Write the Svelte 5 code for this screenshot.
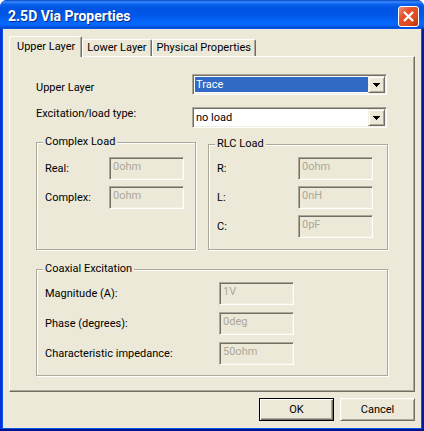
<script lang="ts">
  let activeTab = $state("Upper Layer");
  let layer = $state("Trace");
  let loadType = $state("no load");

  const tabs = ["Upper Layer", "Lower Layer", "Physical Properties"];

  const complexLoad = [
    { id: "real", label: "Real:", value: "0ohm" },
    { id: "complex", label: "Complex:", value: "0ohm" },
  ];

  const rlcLoad = [
    { id: "r", label: "R:", value: "0ohm" },
    { id: "l", label: "L:", value: "0nH" },
    { id: "c", label: "C:", value: "0pF" },
  ];

  const coaxial = [
    { id: "magnitude", label: "Magnitude (A):", value: "1V" },
    { id: "phase", label: "Phase (degrees):", value: "0deg" },
    { id: "impedance", label: "Characteristic impedance:", value: "50ohm" },
  ];
</script>

{#snippet field(row: { id: string; label: string; value: string })}
  <div class="field">
    <label for={row.id}>{row.label}</label>
    <input id={row.id} type="text" value={row.value} disabled />
  </div>
{/snippet}

{#snippet arrow()}
  <span class="arrow">
    <svg width="7" height="4" viewBox="0 0 7 4" shape-rendering="crispEdges">
      <path d="M0 0h7v1h-1v1h-1v1h-1v1h-1v-1h-1v-1h-1v-1h-1z" />
    </svg>
  </span>
{/snippet}

<div class="window">
  <header class="titlebar">
    <h1>2.5D Via Properties</h1>
    <button class="close" aria-label="Close">
      <svg width="13" height="13" viewBox="0 0 13 13">
        <path d="M2 2l9 9M11 2l-9 9" stroke="#fff" stroke-width="2.3" />
      </svg>
    </button>
  </header>

  <main>
    <div class="tabs" role="tablist">
      {#each tabs as tab}
        <button
          class="tab"
          class:active={activeTab === tab}
          role="tab"
          aria-selected={activeTab === tab}
          onclick={() => (activeTab = tab)}>{tab}</button
        >
      {/each}
    </div>

    <div class="panel" role="tabpanel">
      <div class="choices">
        <label class="low" for="layer">Upper Layer</label>
        <div class="combo focused">
          <select id="layer" bind:value={layer}>
            <option>Trace</option>
            <option>Plane</option>
          </select>
          {@render arrow()}
        </div>
        <label class="high" for="load-type">Excitation/load type:</label>
        <div class="combo">
          <select id="load-type" bind:value={loadType}>
            <option>no load</option>
            <option>complex load</option>
          </select>
          {@render arrow()}
        </div>
      </div>

      <div class="loads">
        <fieldset class="complex">
          <legend>Complex Load</legend>
          {#each complexLoad as row}
            {@render field(row)}
          {/each}
        </fieldset>
        <fieldset class="rlc">
          <legend>RLC Load</legend>
          {#each rlcLoad as row}
            {@render field(row)}
          {/each}
        </fieldset>
      </div>

      <fieldset class="coaxial">
        <legend>Coaxial Excitation</legend>
        {#each coaxial as row}
          {@render field(row)}
        {/each}
      </fieldset>
    </div>

    <footer>
      <button class="push default">OK</button>
      <button class="push">Cancel</button>
    </footer>
  </main>
</div>

<style>
  :global(body) {
    background: #fff;
  }

  .window,
  button,
  input,
  select {
    font-family: Roboto, "Liberation Sans", Arial, sans-serif;
    font-size: 11px;
    line-height: 14px;
    color: #000;
  }

  .window {
    box-sizing: border-box;
    min-height: 100vh;
    display: flex;
    flex-direction: column;
    background:
      linear-gradient(#00138c, #00138c) bottom / 100% 2px no-repeat,
      linear-gradient(90deg, #0831d9 50%, #001ea0 50%);
    border-radius: 7px 7px 0 0;
    overflow: hidden;
  }

  /* Title bar */
  .titlebar {
    display: flex;
    align-items: center;
    justify-content: space-between;
    box-sizing: border-box;
    height: 29px;
    padding: 3px 5px 0 8px;
    background: linear-gradient(
      #0344c4 0,
      #3a8bff 2px,
      #0b62ee 4px,
      #0054e3 8px,
      #0055e6 14px,
      #0566fb 22px,
      #0468ff 25px,
      #0050d8 27px,
      #0040c0 29px
    );
  }

  h1 {
    margin: 0;
    font-size: 14px;
    line-height: 20px;
    font-weight: 700;
    color: #fff;
    text-shadow: 1px 1px 0 #0a2a8c;
  }

  .close {
    display: grid;
    place-items: center;
    width: 21px;
    height: 21px;
    padding: 0;
    border: 1px solid #fff;
    border-radius: 3px;
    background: linear-gradient(135deg, #ec9078 0, #e4512a 35%, #dd4a20 70%, #b83008 100%);
  }

  main {
    flex: 1;
    display: flex;
    flex-direction: column;
    margin: 0 3px 3px;
    padding: 7px 6px;
    background: #ece9d8;
    box-shadow: 0 0 0 1px #0855e8;
  }

  /* Tabs */
  .tabs {
    display: flex;
    align-items: flex-end;
    height: 20px;
  }

  .tab {
    height: 17px;
    padding: 0 4px;
    border: 0;
    border-top: 1px solid #fff;
    border-left: 1px solid #fff;
    border-right: 1px solid #716f64;
    border-radius: 2px 2px 0 0;
    box-shadow: inset -1px 0 0 #aca899;
    background: #ece9d8;
    white-space: nowrap;
  }

  .tab.active {
    position: relative;
    height: 21px;
    padding: 0 6px 0 7px;
    margin-bottom: -1px;
  }

  .panel {
    flex: 1;
    padding: 17px 26px 14px;
    border: 1px solid #716f64;
    border-top-color: #fff;
    border-left-color: #fff;
    box-shadow: inset -1px -1px 0 #aca899;
  }

  /* Drop-downs */
  .choices {
    display: grid;
    grid-template-columns: 156px 1fr;
    row-gap: 12px;
    padding-right: 1px;
  }

  .low {
    align-self: end;
  }

  .high {
    align-self: start;
  }

  .combo {
    display: flex;
    box-sizing: border-box;
    height: 21px;
    position: relative;
    border: 1px solid;
    border-color: #aca899 #fff #fff #aca899;
    background: #fff;
    box-shadow: inset 1px 1px 0 #716f64, inset -1px -1px 0 #f1efe2;
    padding: 2px;
  }

  select {
    flex: 1;
    min-width: 0;
    appearance: none;
    border: 0;
    border-radius: 0;
    outline: 0;
    margin-right: 16px;
    padding: 0 1px;
    background: #fff;
  }

  .focused select {
    background: #316ac5;
    color: #fff;
  }

  .arrow {
    position: absolute;
    top: 1px;
    right: 1px;
    bottom: 1px;
    width: 15px;
    display: grid;
    place-items: center;
    border: 1px solid;
    border-color: #f1efe2 #716f64 #716f64 #f1efe2;
    box-shadow: inset 1px 1px 0 #fff, inset -1px -1px 0 #aca899;
    background: #ece9d8;
    pointer-events: none;
  }

  /* Group boxes */
  .loads {
    display: grid;
    grid-template-columns: 160fr 180fr;
    column-gap: 12px;
    margin: 7px 0 12px;
  }

  fieldset {
    display: flex;
    flex-direction: column;
    gap: 6px;
    min-width: 0;
    margin: 0;
    padding: 8px 14px 11px 8px;
    border: 1px solid #aca899;
    box-shadow: 1px 1px 0 #fff, inset 1px 1px 0 #fff;
  }

  legend {
    margin-left: -2px;
    padding: 0 2px;
    background: #ece9d8;
  }

  .rlc {
    margin-top: 2px;
    padding-top: 6px;
  }

  .complex .field {
    grid-template-columns: 64px 75px;
  }

  .rlc .field {
    grid-template-columns: 81px 75px;
  }

  .coaxial .field {
    grid-template-columns: 174px 75px;
  }

  .coaxial {
    gap: 7px;
    padding-top: 6px;
    padding-bottom: 10px;
  }

  .field {
    display: grid;
    align-items: center;
  }

  input {
    box-sizing: border-box;
    width: 100%;
    height: 23px;
    margin: 0;
    padding: 0 3px 4px;
    border: 1px solid;
    border-color: #aca899 #fff #fff #aca899;
    border-radius: 0;
    box-shadow: inset 1px 1px 0 #716f64, inset -1px -1px 0 #f1efe2;
    background: #ece9d8;
  }

  input:disabled {
    color: #aca899;
  }

  /* Buttons */
  footer {
    display: flex;
    justify-content: flex-end;
    gap: 6px;
    padding-top: 6px;
  }

  .push {
    width: 75px;
    height: 23px;
    padding: 0;
    border: 1px solid;
    border-color: #fff #716f64 #716f64 #fff;
    background: #ece9d8;
    box-shadow: inset 1px 1px 0 #f1efe2, inset -1px -1px 0 #aca899;
  }

  .default {
    border-color: #000;
    box-shadow: inset 1px 1px 0 #fff, inset -1px -1px 0 #716f64, inset -2px -2px 0 #aca899;
  }
</style>
